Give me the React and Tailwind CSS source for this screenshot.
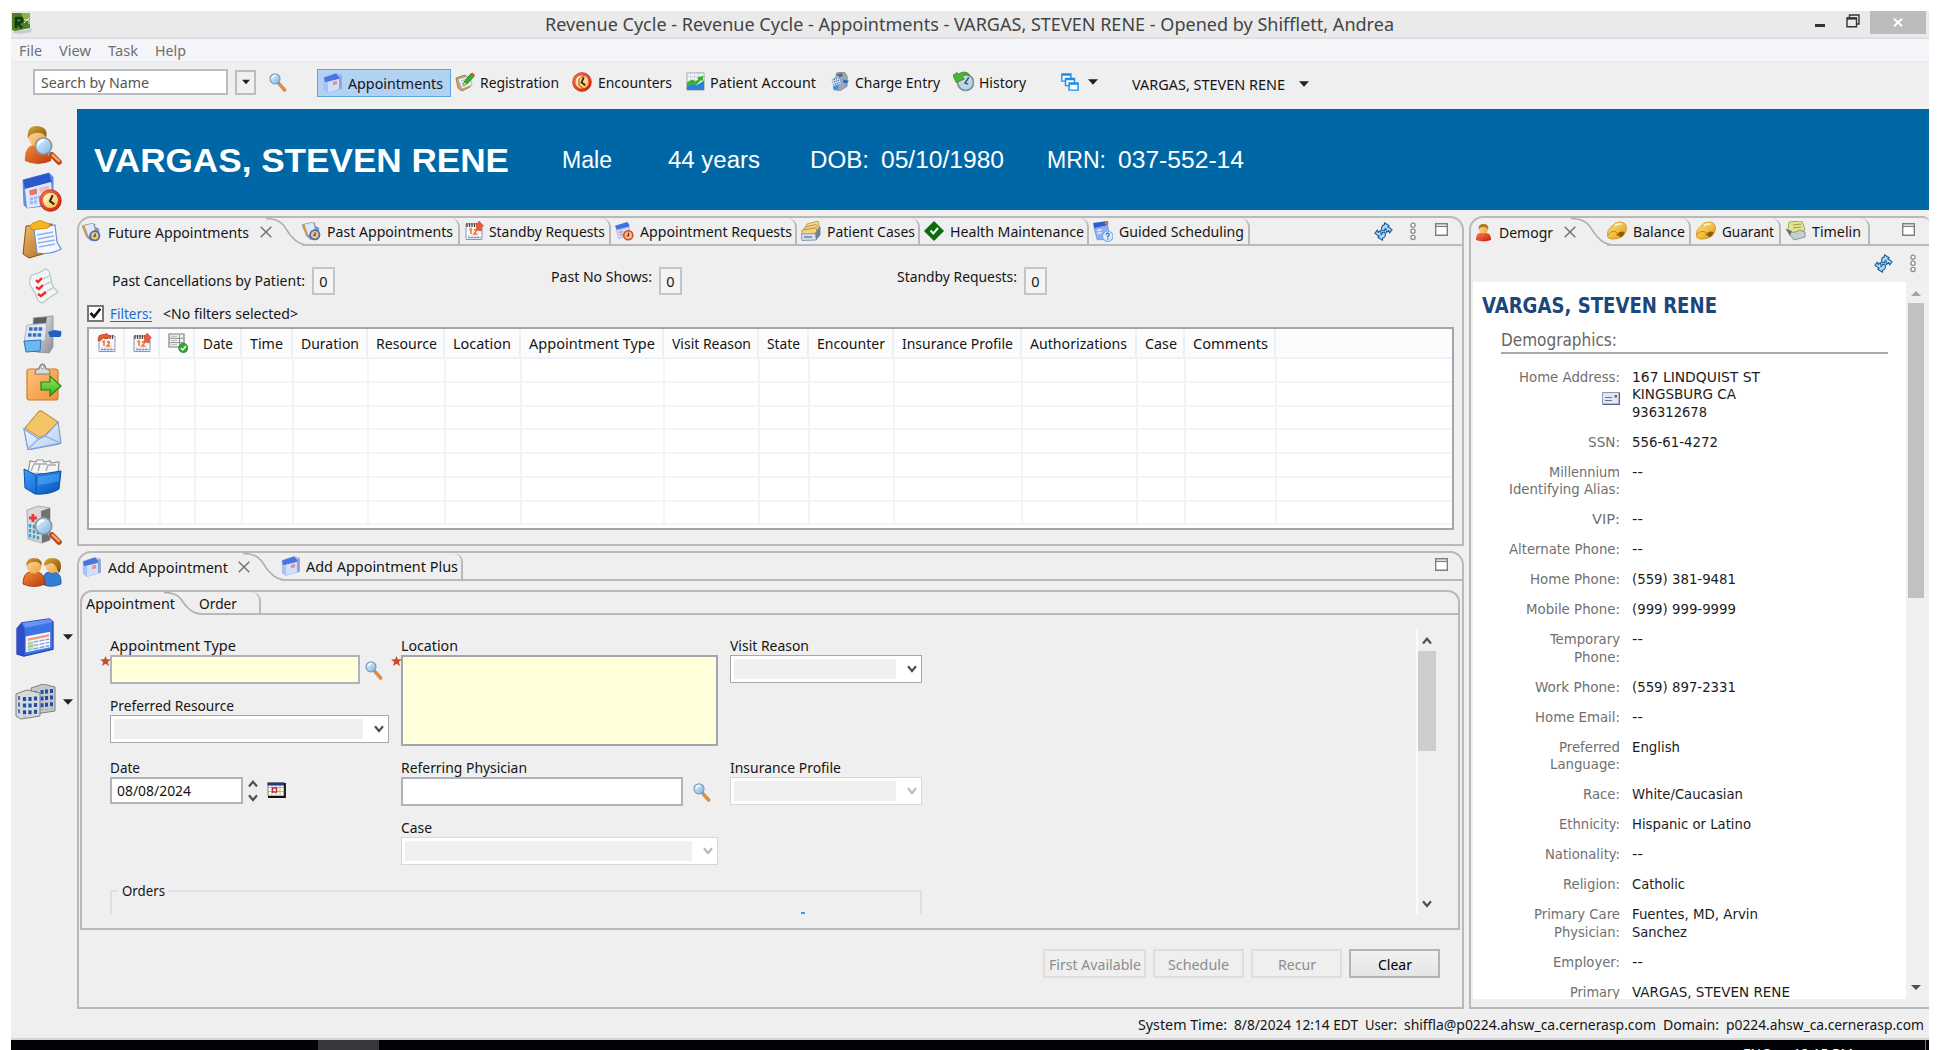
import React, { useLayoutEffect, useRef, useState } from "react";

/* Single line of text condensed or widened to a given advance width. */
function Fit({ w, className = "", children }) {
  const ref = useRef(null);
  const [k, setK] = useState(1);
  useLayoutEffect(() => {
    const n = ref.current.offsetWidth;
    const r = ref.current.getBoundingClientRect().width / k || n;
    setK(w / r);
  }, [w]);
  return (
    <span className={"inline-block shrink-0 whitespace-pre " + className} style={{ width: w }}>
      <span ref={ref} className="inline-block origin-left" style={{ transform: `scaleX(${k})` }}>
        {children}
      </span>
    </span>
  );
}

/* ---------- shared gradients ---------- */
const G = ({ id, a, b, x2 = 1, y2 = 1 }) => (
  <linearGradient id={id} x1="0" y1="0" x2={x2} y2={y2}>
    <stop offset="0" stopColor={a} />
    <stop offset="1" stopColor={b} />
  </linearGradient>
);
const Defs = () => (
  <svg className="absolute h-0 w-0">
    <defs>
      <G id="gPage2" a="#e8f0ff" b="#7fa2ee" />
      <G id="gOrange" a="#f58a3a" b="#b93a0c" />
      <G id="gHair" a="#d9a93a" b="#7d5206" />
      <G id="gSkin" a="#ffd9a0" b="#f0a040" />
      <G id="gLens" a="#e6f6ff" b="#7db4e0" />
      <G id="gBoard" a="#f3bd6a" b="#a8651c" />
      <G id="gBoard2" a="#ffc27a" b="#f0923a" />
      <G id="gGreen" a="#9df05a" b="#35a51e" x2={0} />
      <G id="gSteel" a="#f4f4f4" b="#8a8d92" />
      <G id="gBox" a="#3aa0ff" b="#0653b8" />
      <G id="gGold" a="#ffe680" b="#e09a10" />
      <G id="gRed" a="#ff7a4a" b="#c81e08" />
      <G id="gFace" a="#fffbd8" b="#f3c04a" />
      <G id="gEnv" a="#f7fbff" b="#b5cdf3" />
    </defs>
  </svg>
);

const Svg = ({ s = 20, vb = "0 0 20 20", className = "", children }) => (
  <svg width={s} height={s} viewBox={vb} className={"shrink-0 " + className} fill="none">
    {children}
  </svg>
);

/* ---------- small icons ---------- */
const Clock = ({ x, y, r }) => (
  <g>
    <circle cx={x} cy={y} r={r} fill="url(#gRed)" stroke="#a81808" strokeWidth={r * 0.06} />
    <circle cx={x} cy={y} r={r * 0.7} fill="url(#gFace)" />
    <path
      d={`M${x + r * 0.2} ${y - r * 0.5}L${x - r * 0.05} ${y + r * 0.05}L${x + r * 0.35} ${y + r * 0.35}`}
      stroke="#3a2a10"
      strokeWidth={r * 0.2}
    />
  </g>
);
const AppLogo = () => (
  <Svg s={21} vb="0 0 21 21">
    <path d="M1 18L15 17L20 15L19 19L8 21L1 20Z" fill="#c3ccd6" />
    <path d="M0 0H18V15L3 18L0 17Z" fill="#4d7f26" />
    <path d="M9 0H18V8L12 7Z" fill="#93b23a" />
    <path d="M4 4V15M4 5H8Q11 5 10 8Q9 10 5 10L10 15" stroke="#123a10" strokeWidth="2.4" />
    <path d="M12 10L17 5M12 7H17V11" stroke="#e5efcf" strokeWidth="1" />
  </Svg>
);
const Magnifier = ({ className = "" }) => (
  <Svg s={20} className={className}>
    <path d="M10.5 11L16.5 18" stroke="#8a8f98" strokeWidth="3.4" strokeLinecap="round" />
    <path d="M12 12.6L17 18" stroke="#f08a32" strokeWidth="2.8" strokeLinecap="round" />
    <circle cx="7" cy="6.8" r="5" fill="url(#gLens)" stroke="#7a9cc0" strokeWidth="1.2" />
    <path d="M4 6Q5 3.4 8 3.4" stroke="#fff" strokeWidth="1.4" />
  </Svg>
);
const Appt = () => (
  <Svg>
    <path d="M1 4.5L13 .5L18.5 2V15.5L5 19.5L1.5 17Z" fill="url(#gPage2)" stroke="#8aa5e0" strokeWidth=".6" />
    <path d="M1 4.5L13 .5L16 3.5V6L2 9.500Z" fill="#4a74e0" />
    <path d="M16 3.500L18.500 2V15.500L16 16.300Z" fill="#93a5cf" />
    <path d="M2 9.500L16 6V16.300L5 19.500Z" fill="#cfe0ff" />
    <path d="M2 9.500L5 9V19.500L1.500 17Z" fill="#a9c2f8" />
    <path d="M10 8.800L14 7.800V11.300L10 12.300Z" fill="#f28a80" />
  </Svg>
);
const Registration = () => (
  <Svg>
    <path d="M1 6L10 3L15 8V15L7 19L3 16Z" fill="#d8a862" stroke="#94682c" strokeWidth=".8" />
    <path d="M3 7L15 4L17 13L7 17Z" fill="#e9f2fa" stroke="#8aa0ac" strokeWidth=".7" />
    <path d="M6 9L12 7M7 12L11 11" stroke="#9fb4c4" />
    <path d="M8 14L9 10L16 1.5L19.3 4L12 12Z" fill="#37b22a" stroke="#1b7414" strokeWidth=".8" />
    <path d="M8 14L9 10.3L11.8 12Z" fill="#e9c88c" />
    <path d="M15.8 1.8L17.4 .5L20 2.8L19 4.2Z" fill="#e8553a" />
  </Svg>
);
const Encounters = () => (
  <Svg>
    <Clock x={10} y={10} r={9.4} />
    <path d="M13 2.500L7 7.500V13L13 18" stroke="#e0371a" strokeWidth="1.600" opacity=".7" />
  </Svg>
);
const Account = () => (
  <Svg s={19}>
    <path d="M1 1H19V19H1Z" fill="#f4f6f8" stroke="#9aa6b2" strokeWidth="1" />
    <path d="M5 1V14M9 1V10M13 1V8M1 5H19M1 9H12" stroke="#c2ccd6" strokeWidth=".8" />
    <path d="M1 15L7 12L11 14L19 9V19H1Z" fill="#2f7fe0" />
    <path d="M1 15V11L7 8L10 10L13 7.500L11.500 6L18 4L17.500 10L16 8.500L10.500 14L7 12Z" fill="#2fb51f" />
  </Svg>
);
const Charge = () => (
  <Svg s={19}>
    <path d="M7 1L15 0L18 4V15L10 20L4 18Z" fill="#9aa7b6" stroke="#66707d" strokeWidth=".7" />
    <path d="M7 3L12 1L14 4L9 6Z" fill="#5d6874" />
    <path d="M2 8L9 4L12 12L4 15Z" fill="#dfe8f2" stroke="#7a8796" strokeWidth=".6" />
    <path d="M4 8L9 6M4 10.5L10 8.4M5 13L10 11" stroke="#2b78cf" strokeWidth="1.4" strokeDasharray="1.4 .8" />
    <path d="M14 8L20 9.5L17 12L14 11Z" fill="#1f66c8" />
    <path d="M3 15L9 14V18L4 19.5Z" fill="#3b95e6" />
  </Svg>
);
const HistoryIcon = () => (
  <Svg s={21}>
    <circle cx="12" cy="11" r="7.6" fill="#bcd6e6" stroke="#7291a0" strokeWidth="1.600" />
    <path d="M15 6L11.5 11.5L14.5 12.5" stroke="#33505c" strokeWidth="1.4" />
    <path d="M0 4L4 1.500L5 3Q12 -1.500 16 4Q11 2 9 5.500L11 7.500L3 11Z" fill="#4cb43a" stroke="#2a7d20" strokeWidth=".7" />
  </Svg>
);
const Cascade = () => (
  <Svg s={18}>
    <path d="M1 1H11V9H1Z" fill="#fff" stroke="#1d8de8" strokeWidth="1.6" />
    <path d="M5 6H15V14H5Z" fill="#fff" stroke="#1d8de8" strokeWidth="1.6" />
    <path d="M9 11H19V19H9Z" fill="#fff" stroke="#1d8de8" strokeWidth="1.6" />
    <path d="M1 2H11M5 7H15M9 12H19" stroke="#1d8de8" strokeWidth="2" />
  </Svg>
);
const Future = () => (
  <Svg s={19}>
    <path d="M4 1L14 1V4L18 6V15L9 19L4 14Z" fill="#7f95c4" />
    <path d="M0 3L12 0L15 11L5 15Z" fill="#dfe9ff" stroke="#a8977a" strokeWidth=".8" />
    <path d="M0 3L2.500 2.400L7 14.300L5 15Z" fill="#c99a55" />
    <circle cx="13.500" cy="13.500" r="4.900" fill="#e8c878" stroke="#4a6cb4" strokeWidth="1.800" />
    <path d="M13.800 11V14H11.800" stroke="#4a3512" strokeWidth="1.2" />
  </Svg>
);
const Cal12 = ({ up = true }) => (
  <Svg s={20}>
    <path d="M2 3H18V18.5H2Z" fill="#f6f8ff" stroke="#8c95c0" strokeWidth="1" />
    <path d="M3 2V6M5.5 2V6M8 2V6M10.5 2V6M13 2V6M15.5 2V6" stroke="#5c4038" strokeWidth="1.3" />
    <path d="M5.500 9L7 8V13M10 9.5Q12.500 7.5 12.500 10L10 13H13.500" stroke="#f07a2c" strokeWidth="1.600" />
    <path d="M4 16.5H17M5 14.5V18M8 14.5V18M11 14.5V18M14 14.5V18" stroke="#8391c8" strokeWidth=".8" />
    {up ? (
      <path d="M12.5 9V4.5L15 0L19.5 5L17.5 6V10Z" fill="#f0583a" stroke="#c9402a" strokeWidth=".5" />
    ) : (
      <path d="M1 8L1.500 4Q4 .5 8.500 1.500L9 0L13.500 3.500L9 6L8.500 4.500Q5 4.500 4 7.500Z" fill="#f0562a" stroke="#b33a1a" strokeWidth=".6" />
    )}
  </Svg>
);
const ListOk = () => (
  <Svg s={20}>
    <path d="M1 1H16V14H1Z" fill="#f3f3f3" stroke="#7b8085" strokeWidth="1.2" />
    <path d="M2 5.3H15M2 9.6H15M11.5 2V13" stroke="#8d9196" />
    <path d="M3 3.3H9M3 7.5H9M3 11.6H9" stroke="#b5b8bc" />
    <circle cx="15.3" cy="15" r="4.7" fill="#35a52e" stroke="#1f7a1b" strokeWidth=".6" />
    <path d="M12.8 15L14.8 17L18 13" stroke="#fff" strokeWidth="1.5" />
  </Svg>
);
const ApptReq = () => (
  <Svg s={19}>
    <path d="M0 4L13 0L15 3V6L2 9Z" fill="#3f72e0" />
    <path d="M1.500 8.500L15 5L15 14L4 17.500Z" fill="#cddcff" stroke="#8ba6e8" strokeWidth=".6" />
    <path d="M4 11L8 10M5 14L9 13" stroke="#f0908a" strokeWidth="1.500" />
    <circle cx="14" cy="14" r="4.800" fill="#f3b880" stroke="#d04a2a" strokeWidth="1.600" />
    <path d="M14.200 11.300V14.500H12.300" stroke="#5a2c12" strokeWidth="1.2" />
  </Svg>
);
const Cases = () => (
  <Svg s={20}>
    <path d="M6 3L17 0L19 8H4Z" fill="#f3d98c" stroke="#b58a36" strokeWidth=".8" />
    <path d="M4 6L15 3.500L19 9H3Z" fill="#efcf78" stroke="#b58a36" strokeWidth=".8" />
    <path d="M1 9L15 7L17 13L1 15Z" fill="#f3d484" stroke="#b08434" strokeWidth=".8" />
    <path d="M0 13L14 12.500L19 6V14L15 19L1 19.500Z" fill="#d3e0ec" stroke="#7f92a6" strokeWidth=".9" />
    <path d="M14 12.500L19 6V14L15 19Z" fill="#6d8298" />
    <path d="M3 16H11" stroke="#4f7fae" strokeWidth="1.4" />
  </Svg>
);
const Health = () => (
  <Svg s={20}>
    <path d="M10 0L20 10L10 20L0 10Z" fill="#0b6b0b" />
    <path d="M6.5 9.5L9.3 12.5L14 7" stroke="#fff" strokeWidth="2" />
  </Svg>
);
const Guided = () => (
  <Svg s={21}>
    <path d="M1 2L15 0V4L2 7Z" fill="#2f5cd0" />
    <path d="M2 7L15 4L17 17L5 18Z" fill="#8fb0f4" stroke="#5c82dd" strokeWidth=".6" />
    <path d="M5 9L9 8M5 12L9 11" stroke="#e6efff" strokeWidth="1.5" />
    <path d="M13 0L16 2L14.500 4L12 2.500Z" fill="#e0705a" />
    <circle cx="15" cy="14.5" r="5" fill="#d9ecfb" stroke="#7aa8d8" />
    <path d="M13.5 13Q13.5 11.5 15 11.5Q17 12 16 13.8L15 14.7V15.8M15 16.6V17.8" stroke="#2b74c8" strokeWidth="1.3" />
  </Svg>
);
const PersonSm = () => (
  <Svg s={19}>
    <path d="M2 18Q2 10 7 10.5H12Q18 10 18 18Q10 21 2 18Z" fill="url(#gRed)" />
    <circle cx="10" cy="6.3" r="4.8" fill="url(#gSkin)" />
    <path d="M5 7Q4 1 10 1Q16 1 15 7Q13 3.5 8 4.4Q6 4.6 5 7Z" fill="#b07a14" />
  </Svg>
);
const Coins = () => (
  <Svg s={20}>
    <path d="M0 14Q0 9 5 5Q8 1 13 1Q18.500 1 19.500 6Q20 11 16 15Q10 19 4 18Q0 17 0 14Z" fill="url(#gGold)" stroke="#c98a12" strokeWidth=".7" />
    <path d="M1 14Q3 10 8 10.500Q11 11 10 15" stroke="#c98a12" strokeWidth="1" />
    <path d="M10.500 15Q10 11 15 10.500L17.500 11Q17 15 13 16.500L12 14.500Z" fill="#8a5c10" />
    <path d="M8 4.500Q11 2.200 14.500 3" stroke="#fff6c8" strokeWidth="1.8" />
  </Svg>
);
const Timeline = () => (
  <Svg s={20}>
    <path d="M3 1L16 0L19 9L9 14L2 9Z" fill="#e3e68a" stroke="#9a9e50" strokeWidth=".9" />
    <path d="M7 4L15 3M7 7L15 6" stroke="#9a9e50" strokeWidth="1.2" />
    <path d="M0 8Q6 14 14 9L19 11V16L8 19L4 14Z" fill="#c3d0ce" stroke="#7c8f8d" strokeWidth=".9" />
    <path d="M0 8L6 10L4 15Z" fill="#5f7a78" />
  </Svg>
);
const Refresh = ({ className = "" }) => (
  <Svg s={19} className={className}>
    <g fill="#b9daf5" stroke="#1d5f9e" strokeWidth="1.200" strokeLinejoin="round">
      <path d="M8 8.500Q7.500 3.500 11 3V.8L16 4L14.500 5L19 8L16.500 11.500L15.500 9L13 11L12.500 6.500Q10.800 7 11 9.500Z" />
      <path d="M12 11.500Q12.500 16.500 9 17V19.200L4 16L5.500 15L1 12L3.500 8.500L4.500 11L7 9L7.500 13.500Q9.200 13 9 10.500Z" />
    </g>
  </Svg>
);
const Dots = ({ className = "" }) => (
  <svg width="8" height="19" viewBox="0 0 8 19" fill="none" className={"shrink-0 " + className}>
    <g stroke="#8c8c8c" strokeWidth="1.3" fill="#fff">
      <circle cx="4" cy="3.2" r="2.1" />
      <circle cx="4" cy="9.3" r="2.1" />
      <circle cx="4" cy="15.4" r="2.1" />
    </g>
  </svg>
);
const MaxBox = ({ className = "" }) => (
  <svg width="13" height="13" viewBox="0 0 13 13" fill="none" className={"shrink-0 " + className}>
    <path d="M.7 .7H12.3V12.3H.7Z" fill="#fff" stroke="#7f7f7f" strokeWidth="1.4" />
    <path d="M.7 3.4H12.3" stroke="#7f7f7f" strokeWidth="1.3" />
  </svg>
);
const TabX = ({ className = "" }) => (
  <svg width="12" height="12" viewBox="0 0 12 12" className={"shrink-0 " + className}>
    <path d="M.7 .7L11.3 11.3M11.3 .7L.7 11.3" stroke="#6b6b6b" strokeWidth="1.3" />
  </svg>
);
const Caret = ({ className = "", w = 10 }) => (
  <svg width={w} height="6" viewBox="0 0 10 6" className={"shrink-0 " + className}>
    <path d="M0 .3H10L5 5.7Z" fill="#222" />
  </svg>
);
const Chev = ({ up, c = "#505050", className = "" }) => (
  <svg width="10" height="8" viewBox="0 0 10 8" fill="none" className={"shrink-0 " + className}>
    <path d={up ? "M1 6.5L5 1.8L9 6.5" : "M1 1.3L5 6L9 1.3"} stroke={c} strokeWidth="2.2" />
  </svg>
);
const Star = () => (
  <svg width="11" height="10" viewBox="0 0 11 10" className="absolute -left-[12px] -top-[1px]">
    <path d="M5.5 0L6.8 3.3L11 3.5L7.8 6L9 10L5.5 7.8L2 10L3.2 6L0 3.5L4.2 3.3Z" fill="#cc4a2a" />
  </svg>
);

/* ---------- side bar icons (40 x 40) ---------- */
const Big = ({ children }) => <Svg s={40} vb="0 0 40 40">{children}</Svg>;
const Lens = ({ x = 0, y = 0 }) => (
  <g transform={`translate(${x} ${y})`}>
    <path d="M27 28L31 32" stroke="#a9b4bd" strokeWidth="4" />
    <path d="M30 30L37 37" stroke="#b9421a" strokeWidth="5.5" strokeLinecap="round" />
    <path d="M30.5 30L37 36" stroke="#f9a560" strokeWidth="2.4" strokeLinecap="round" />
    <circle cx="21.5" cy="21" r="8.2" fill="url(#gLens)" stroke="#86939c" strokeWidth="1.6" />
    <path d="M16 20Q17.5 15.5 22 15.5" stroke="#fff" strokeWidth="2" />
  </g>
);
const SidePerson = () => (
  <Big>
    <path d="M3 36Q2 22 11 20H22Q30 23 29 36Q16 42 3 36Z" fill="url(#gOrange)" />
    <ellipse cx="15" cy="13" rx="8" ry="9" fill="url(#gSkin)" />
    <path d="M6 14Q4 1 15 1Q27 2 24 13Q22 7 14 8Q8 8 6 14Z" fill="url(#gHair)" />
    <Lens />
  </Big>
);
const SideCalClock = () => (
  <Big>
    <path d="M1 8L27 1L31 5V33L5 36L2 33Z" fill="#6c8fe4" stroke="#5878cf" strokeWidth=".8" />
    <path d="M1 8L27 1L30 10L3 17Z" fill="#2b59cc" />
    <path d="M3 17L29 10L31 32L5 36Z" fill="#dbe8ff" />
    <path d="M7 18.5L15 16.5V22L8 23.5Z" fill="#f0554a" opacity=".8" />
    <path d="M17 16L27 13.5V19L18 21Z" fill="#f5b8bd" />
    <path d="M8 27L18 25M8 31L16 29.5" stroke="#9db7ee" strokeWidth="3" strokeDasharray="3 1" />
    <Clock x={28.5} y={28.5} r={10.8} />
  </Big>
);
const SideClip = () => (
  <Big>
    <path d="M4 6L30 4L31 31L7 38L1 34Z" fill="url(#gBoard)" stroke="#8a5012" strokeWidth="1" />
    <path d="M12 9L33 5L35 22L39 29Q28 35 15 33Z" fill="#f4f8ff" stroke="#6d8fd8" strokeWidth="1.2" />
    <path d="M15 15L31 12M16 19L32 16M16 23L33 20M17 27L33 24" stroke="#8fb1f0" strokeWidth="1.6" />
    <path d="M8 6Q9 3 14 2Q18 -1 22 2L28 4L26 8L10 10Z" fill="#f7b51e" stroke="#c98208" strokeWidth=".8" />
  </Big>
);
const SideCheck = () => (
  <Big>
    <path d="M10 8Q18 6 24 2Q27 3 28 8L31 20L36 25Q28 30 20 36Q15 34 14 28L8 18Q7 12 10 8Z" fill="#f3f7f9" stroke="#b7c4c9" strokeWidth="1.2" />
    <path d="M14 13L16 15L20 11M14 20L17 22L21 18M16 27L19 29L24 25" stroke="#ef2a22" strokeWidth="2.4" />
    <path d="M21 12L27 9M22 18L29 15M25 24L31 21" stroke="#c3cdd2" strokeWidth="1.4" />
  </Big>
);
const SideRegister = () => (
  <Big>
    <path d="M11 3L31 1V32L27 38L14 37Z" fill="url(#gSteel)" stroke="#8c9096" strokeWidth=".8" />
    <path d="M12 3L25 2L24 9L11 10Z" fill="#5a5f63" />
    <path d="M5 10L25 8L23 26L2 27Z" fill="#e4e8ec" stroke="#a2a8ae" strokeWidth=".8" />
    <path d="M7 14H21M6 20H20" stroke="#2f72cc" strokeWidth="3.600" strokeDasharray="3.6 1.2" />
    <path d="M2 26L19 25L18 36L4 37Z" fill="#6db8f0" stroke="#2d72be" strokeWidth="1" />
    <path d="M26 17L32 15L39 16Q40 20 38 22L28 22Z" fill="#1f62c6" />
  </Big>
);
const SideClipArrow = () => (
  <Big>
    <rect x="5" y="7" width="31" height="31" rx="2.5" fill="url(#gBoard2)" stroke="#cf7d28" strokeWidth="1.2" />
    <path d="M13 12Q13 7 17 7Q18 2 20.500 2Q23 2 24 7Q28 7 28 12Z" fill="#d8dadc" stroke="#7e8285" strokeWidth="1.2" />
    <circle cx="20.500" cy="5" r="1.6" fill="#fff" stroke="#7e8285" strokeWidth=".8" />
    <path d="M19 20H28V14L39 24L28 34V28H19Z" fill="url(#gGreen)" stroke="#23841a" strokeWidth="1.2" />
  </Big>
);
const SideEnv = () => (
  <Big>
    <path d="M2 19L17 1Q19 0 21 2L36 12L38 34L6 40Z" fill="#e9eef8" stroke="#8aa2cc" strokeWidth="1" />
    <path d="M3 18L17 1.500Q19 .5 21 2L36 12L22 26L17 27Z" fill="#f3c568" stroke="#c48f28" strokeWidth="1" />
    <path d="M2 19L17 29L23 26L36 12L39 33L6 39.500Z" fill="url(#gEnv)" stroke="#7f9fd4" strokeWidth="1.2" />
    <path d="M6 39L18 27.500L23 26L38 33" stroke="#8fb0e2" strokeWidth="1.2" />
  </Big>
);
const SideFiles = () => (
  <Big>
    <path d="M6 16L8 4L14 5L15 3H21L22 5L28 4L29 6L37 5L36 17Z" fill="#f5f5f5" stroke="#8f9296" strokeWidth="1.2" />
    <path d="M9 14L12 7H18M16 14L18 7H25M24 14L26 8H34" stroke="#a8abb0" strokeWidth="1.4" />
    <path d="M2 12L14 18L39 14L37 32Q28 38 13 37L3 31Z" fill="url(#gBox)" stroke="#0c4fa6" strokeWidth="1" />
    <path d="M14 18V36" stroke="#0f58b4" strokeWidth="1.2" />
    <path d="M16 20L37 16.500V24Q27 27 16 28Z" fill="#4fb0ff" opacity=".5" />
  </Big>
);
const SideHospital = () => (
  <Big>
    <path d="M5 5L16 1L28 3V35L20 38L6 34Z" fill="#d6d8da" stroke="#9a9da0" strokeWidth=".8" />
    <path d="M19 6L28 3V35L20 38Z" fill="#6e7275" />
    <path d="M11 9V17M7 13H15" stroke="#e63a3a" strokeWidth="2.8" />
    <path d="M8 19V34M12 20V35M16 21V36" stroke="#3b9ed4" strokeWidth="2.4" strokeDasharray="3.4 1.6" />
    <Lens />
  </Big>
);
const SidePeople = () => (
  <Big>
    <path d="M22 30Q20 21 27 20H33Q40 22 39 32Q30 36 22 33Z" fill="#2f7fd6" stroke="#1a559c" strokeWidth=".8" />
    <circle cx="30.5" cy="14" r="7" fill="url(#gSkin)" />
    <path d="M22 14Q22 6 30 6Q39 6 39 14Q39 20 36 21Q35 13 30 11Q26 12 22 14Z" fill="url(#gHair)" />
    <path d="M1 32Q1 21 8 20H16Q23 22 23 32Q12 37 1 32Z" fill="url(#gOrange)" stroke="#9c2f0a" strokeWidth=".8" />
    <circle cx="12" cy="14" r="7.4" fill="url(#gSkin)" />
    <path d="M4.500 14Q4 6 12 6Q20.500 6 19.500 14Q17 9 12 10Q7 10 4.500 14Z" fill="url(#gHair)" />
  </Big>
);
const SideCal = () => (
  <Svg s={39} vb="0 0 40 40">
    <path d="M1 11L6 5L34 1L38 4V32L8 39L1 37Z" fill="#3d74e4" stroke="#1f3fae" strokeWidth="1.2" />
    <path d="M1 11L6 5L9 12V39L1 37Z" fill="#2f4fc8" />
    <path d="M6 5L34 1L38 4L10 10Z" fill="#6b93f3" />
    <path d="M10 19L35 14V30L10 35Z" fill="#f6f9ff" />
    <path d="M12 21L34 16.500V19L12 23.500Z" fill="#ef9a86" />
    <path d="M12 26L34 21.500M12 29.500L34 25M12 33L34 28.500" stroke="#8d9be0" strokeWidth="1.4" strokeDasharray="5 1.2" />
    <path d="M12 25V33.500L18 32V24Z" fill="#9fdc9a" opacity=".7" />
  </Svg>
);
const SideBuildings = () => (
  <svg width="41" height="36" viewBox="0 0 41 36" fill="none" className="shrink-0">
    <path d="M16 4L28 0L40 3V27L20 30Z" fill="#c6c8ca" stroke="#7d8083" />
    <path d="M27 6V26M31.500 5.500V25.500M36.500 5V25" stroke="#1f4fa8" strokeWidth="3" strokeDasharray="4 2.600" />
    <path d="M20 7V12" stroke="#1f4fa8" strokeWidth="3" />
    <path d="M1 10L12 6L25 9V32L6 35L1 32Z" fill="#d8dadb" stroke="#7d8083" />
    <path d="M9.500 13V33M15 13V32.500M20.500 12.500V32" stroke="#1f4fa8" strokeWidth="3.200" strokeDasharray="4 2.600" />
    <path d="M4 12V31" stroke="#4a6fae" strokeWidth="2" strokeDasharray="4 2.600" />
  </svg>
);

/* ---------- building blocks ---------- */
const LINE = "border-[#b9b9b9]";

/* Slanted edge between the selected tab and the next one. */
const Curve = ({ w, h }) => (
  <svg width={w} height={h} viewBox={`0 0 ${w} ${h}`} fill="none" className="shrink-0">
    <path d={`M0 .5C${w * 0.45} 1 ${w * 0.42} ${h * 0.42} ${w * 0.58} ${h * 0.66}C${w * 0.7} ${h * 0.88} ${w * 0.8} ${h - 1} ${w} ${h - 1}`} stroke="#adadad" strokeWidth="1.6" />
  </svg>
);
const Tab = ({ icon, w, children, className = "", gap = "gap-[6px]" }) => (
  <div className={"flex h-full shrink-0 items-center rounded-tr-[9px] border-r-2 border-b-2 " + LINE + " " + gap + " " + className}>
    {icon}
    <Fit w={w}>{children}</Fit>
  </div>
);
const Label = ({ w, children, className = "" }) => (
  <div className={"flex h-[19px] shrink-0 items-start " + className}>
    <Fit w={w} className="leading-[18px]">{children}</Fit>
  </div>
);
const Select = ({ className = "", disabled }) => (
  <div className={"flex h-[28px] items-stretch border bg-white p-[3px] " + (disabled ? "border-[#d8d8d8] " : "border-[#a4a8b1] ") + className}>
    <div className="flex-1 bg-[#f0f0f0]" />
    <div className="flex w-[22px] items-center justify-end pr-[1px]">
      <Chev c={disabled ? "#b9b9b9" : "#505050"} />
    </div>
  </div>
);
const Count = ({ w, children, className = "", up }) => (
  <div className={"flex h-[28px] " + className}>
    <Fit w={w} className={up ? "-mt-[1px]" : "pt-[3px]"}>{children}</Fit>
    <div className="ml-[7px] flex w-[23px] items-center justify-center border-2 border-[#c3c5cb] bg-[#f4f4f4] pb-[1px]">0</div>
  </div>
);

const COLS = [
  ["w-[47px]", 30, "Date"],
  ["w-[51px]", 33, "Time"],
  ["w-[75px]", 58, "Duration"],
  ["w-[77px]", 61, "Resource"],
  ["w-[76px]", 58, "Location"],
  ["w-[143px]", 126, "Appointment Type"],
  ["w-[95px]", 79, "Visit Reason"],
  ["w-[50px]", 33, "State"],
  ["w-[85px]", 68, "Encounter"],
  ["w-[128px]", 111, "Insurance Profile"],
  ["w-[115px]", 97, "Authorizations"],
  ["w-[48px]", 32, "Case"],
  ["w-[91px]", 75, "Comments"],
];

const DEMO = [
  [[["Home Address:", 101]], [["167 LINDQUIST ST", 128], ["KINGSBURG CA", 104], ["936312678", 75]], true],
  [[["SSN:", 32]], [["556-61-4272", 86]]],
  [[["Millennium", 71], ["Identifying Alias:", 111]], [["--", 11]]],
  [[["VIP:", 28]], [["--", 11]]],
  [[["Alternate Phone:", 111]], [["--", 11]]],
  [[["Home Phone:", 90]], [["(559) 381-9481", 104]]],
  [[["Mobile Phone:", 94]], [["(999) 999-9999", 104]]],
  [[["Temporary", 70], ["Phone:", 46]], [["--", 11]]],
  [[["Work Phone:", 85]], [["(559) 897-2331", 104]]],
  [[["Home Email:", 85]], [["--", 11]]],
  [[["Preferred", 61], ["Language:", 70]], [["English", 48]]],
  [[["Race:", 37]], [["White/Caucasian", 111]]],
  [[["Ethnicity:", 61]], [["Hispanic or Latino", 119]]],
  [[["Nationality:", 75]], [["--", 11]]],
  [[["Religion:", 57]], [["Catholic", 53]]],
  [[["Primary Care", 86], ["Physician:", 66]], [["Fuentes, MD, Arvin", 126], ["Sanchez", 55]]],
  [[["Employer:", 67]], [["--", 11]]],
  [[["Primary", 50]], [["VARGAS, STEVEN RENE", 158]]],
];

const AddressCard = () => (
  <svg width="18" height="13" viewBox="0 0 18 13" className="mt-[6px]">
    <path d="M.5 .5H17.500V12.500H.5Z" fill="#dfe6f5" stroke="#8b96b5" />
    <path d="M1 12.300H17.300V1" fill="none" stroke="#4d5f8f" strokeWidth="1.3" />
    <path d="M3 5.500H10M3 8.500H10" stroke="#6b7390" />
    <path d="M12.500 3H15V5.500H12.500Z" fill="#d63a2a" />
  </svg>
);

function TopBars() {
  return (
    <>
      <div className="flex h-[28px] items-start border-b-2 border-[#dfdfe1] bg-[#eaeaea]">
        <div className="w-[534px] pt-[2px] pl-[1px]"><AppLogo /></div>
        <div className="text-[18.500px] leading-[26px] text-[#444]">
          <Fit w={849} className="-mt-[1px]">Revenue Cycle - Revenue Cycle - Appointments - VARGAS, STEVEN RENE - Opened by Shifflett, Andrea</Fit>
        </div>
        <div className="ml-auto mr-[3px] flex">
          <div className="mt-[13px] h-[3px] w-[10px] bg-[#333]" />
          <svg width="14" height="14" viewBox="0 0 14 14" fill="none" className="ml-[21px] mt-[3px]">
            <path d="M3.500 3V1H13V10H11" stroke="#333" strokeWidth="1.400" />
            <path d="M1 4H10.500V12.800H1Z" stroke="#333" strokeWidth="1.400" />
            <path d="M1 4.500H10.500" stroke="#333" strokeWidth="2.200" />
          </svg>
          <div className="ml-[10px] flex h-[23px] w-[56px] items-center justify-center bg-[#bcbcbc]">
            <svg width="10" height="9" viewBox="0 0 10 9"><path d="M1 .7L9 8.300M9 .7L1 8.300" stroke="#fff" strokeWidth="1.900" /></svg>
          </div>
        </div>
      </div>
      <div className="flex h-[24px] items-center border-b-2 border-[#ebecef] bg-[#f4f5f8] pl-[8px] text-[#6f6f6f]">
        <Fit w={23}>File</Fit>
        <Fit w={32} className="ml-[17px]">View</Fit>
        <Fit w={30} className="ml-[17px]">Task</Fit>
        <Fit w={31} className="ml-[17px]">Help</Fit>
      </div>
      <div className="flex h-[46px] items-start pt-[6px]">
        <div className="ml-[22px] flex h-[26px] w-[195px] items-center border-2 border-[#b9bcc4] bg-white pb-[1px] pl-[6px] text-[#555]">
          <Fit w={108}>Search by Name</Fit>
        </div>
        <div className="ml-[7px] mt-[1px] flex h-[25px] w-[21px] items-center justify-center border-2 border-[#bdbdbd] bg-[#f0f0f0] pb-[1px]">
          <Caret w={8} />
        </div>
        <Magnifier className="ml-[12px] mt-[3px]" />
        <div className="ml-[29px] flex h-[28px] w-[134px] items-center gap-[5px] border border-[#5fa3de] bg-[#b1d2f3] pl-[5px]">
          <Appt />
          <Fit w={95}>Appointments</Fit>
        </div>
        <div className="flex h-[25px] items-center">
          <div className="ml-[4px] flex items-center gap-[5px]"><Registration /><Fit w={79}>Registration</Fit></div>
          <div className="ml-[13px] flex items-center gap-[6px]"><Encounters /><Fit w={74}>Encounters</Fit></div>
          <div className="ml-[14px] flex items-center gap-[5px]"><Account /><Fit w={106}>Patient Account</Fit></div>
          <div className="ml-[14px] flex items-center gap-[6px]"><Charge /><Fit w={85}>Charge Entry</Fit></div>
          <div className="ml-[13px] flex items-center gap-[5px]"><HistoryIcon /><Fit w={47}>History</Fit></div>
          <div className="ml-[35px] flex items-center gap-[9px]"><Cascade /><Caret w={10} /></div>
        </div>
        <div className="ml-[34px] flex h-[29px] items-center gap-[14px]">
          <Fit w={153}>VARGAS, STEVEN RENE</Fit>
          <Caret />
        </div>
      </div>
    </>
  );
}

function Sidebar() {
  return (
    <div className="flex w-[66px] shrink-0 flex-col pt-[12px] pl-[11px]">
      {[SidePerson, SideCalClock, SideClip, SideCheck, SideRegister, SideClipArrow, SideEnv, SideFiles, SideHospital, SidePeople].map((I, i) => (
        <div key={i} className="flex h-[47.500px] items-center"><I /></div>
      ))}
      <div className="-ml-[6px] mt-[21px] flex h-[40px] items-center gap-[8px]"><SideCal /><Caret /></div>
      <div className="-ml-[7px] mt-[26px] flex h-[38px] items-center gap-[7px]"><SideBuildings /><Caret /></div>
    </div>
  );
}

function AppointmentsPanel() {
  return (
    <div className={"flex h-[330px] flex-col rounded-t-[14px] border-2 " + LINE}>
      <div className="flex h-[28px] shrink-0">
        <div className="flex w-[187px] shrink-0 items-center pl-[3px]">
          <Future />
          <Fit w={141} className="ml-[7px]">Future Appointments</Fit>
          <TabX className="ml-[11px]" />
        </div>
        <Curve w={44} h={28} />
        <div className="-ml-[8px] h-full w-0" />
        <Tab icon={<Future />} w={126} className="w-[158px]">Past Appointments</Tab>
        <Tab icon={<Cal12 />} w={116} className="w-[151px] pl-[4px]" gap="gap-[5px]">Standby Requests</Tab>
        <Tab icon={<ApptReq />} w={152} className="w-[186px] pl-[4px]">Appointment Requests</Tab>
        <Tab icon={<Cases />} w={88} className="w-[123px] pl-[4px]">Patient Cases</Tab>
        <Tab icon={<Health />} w={134} className="w-[169px] pl-[4px]">Health Maintenance</Tab>
        <Tab icon={<Guided />} w={125} className="w-[161px] pl-[3px]">Guided Scheduling</Tab>
        <div className={"flex flex-1 items-center justify-end border-b-2 " + LINE}>
          <Refresh />
          <Dots className="ml-[16px]" />
          <MaxBox className="ml-[18px] mr-[14px] -mt-[3px]" />
        </div>
      </div>
      <div className="mt-[21px] flex shrink-0 pl-[33px]">
        <Count w={193}>Past Cancellations by Patient:</Count>
        <Count w={101} up className="ml-[216px]">Past No Shows:</Count>
        <Count w={120} up className="ml-[215px]">Standby Requests:</Count>
      </div>
      <div className="mt-[7px] flex h-[22px] shrink-0 items-center pl-[8px]">
        <div className="flex h-[17px] w-[17px] items-center justify-center border-2 border-[#777] bg-white">
          <svg width="13" height="12" viewBox="0 0 13 12"><path d="M1.500 6L5 9.800L11.300 1.800" fill="none" stroke="#111" strokeWidth="2.600" /></svg>
        </div>
        <Fit w={42} className="ml-[6px] text-[#1a6bd6] [&>span]:underline [&>span]:underline-offset-2">Filters:</Fit>
        <Fit w={135} className="ml-[11px]">&lt;No filters selected&gt;</Fit>
      </div>
      <div className="ml-[8px] mr-[8px] mt-[3px] flex h-[203px] shrink-0 flex-col border-2 border-[#a3a6ae] bg-white">
        <div className="flex h-[30px] shrink-0 border-b-2 border-[#eaf2fa] bg-[#fcfcfc]">
          <div className="flex w-[36px] items-center justify-end border-r-2 border-[#e8f1fa] pr-[6px]"><Cal12 up={false} /></div>
          <div className="flex w-[35px] items-center justify-end border-r-2 border-[#e8f1fa] pr-[6px]"><Cal12 /></div>
          <div className="flex w-[35px] items-center justify-end border-r-2 border-[#e8f1fa] pr-[5px]"><ListOk /></div>
          {COLS.map(([cls, w, t]) => (
            <div key={t} className={"flex shrink-0 items-center border-r-2 border-[#e8f1fa] pl-[8px] " + cls}>
              <Fit w={w}>{t}</Fit>
            </div>
          ))}
        </div>
        <div className="flex flex-1 flex-col overflow-hidden">
          {[0, 1, 2, 3, 4, 5, 6].map((r) => (
            <div key={r} className="flex h-[23.750px] shrink-0 border-b-2 border-[#f4f4f4]">
              {["w-[37px]", "w-[35px]", "w-[35px]", ...COLS.map((c) => c[0])].map((cls, i) => (
                <div key={i} className={"shrink-0 border-r-2 border-[#f4f4f4] " + cls} />
              ))}
            </div>
          ))}
        </div>
      </div>
    </div>
  );
}

function Form() {
  return (
    <div className="flex flex-1 pt-[14px]">
      <div className="flex h-[285px] flex-1 flex-col overflow-hidden pl-[28px]">
        <div className="flex h-[251px] shrink-0 pt-[7px]">
          <div className="w-[291px] shrink-0">
            <Label w={126}>Appointment Type</Label>
            <div className="flex items-center gap-[4px]">
              <div className="relative h-[29px] w-[250px] border-2 border-[#b0b3ba] bg-[#ffffd9]"><Star /></div>
              <Magnifier />
            </div>
            <Label w={124} className="mt-[12px]">Preferred Resource</Label>
            <Select className="w-[279px]" />
            <Label w={30} className="mt-[15px]">Date</Label>
            <div className="flex items-center">
              <div className="flex h-[27px] w-[133px] items-center border-2 border-[#b0b3ba] bg-white pb-[1px] pl-[5px]"><Fit w={74}>08/08/2024</Fit></div>
              <div className="ml-[5px] flex flex-col gap-[6px]"><Chev up /><Chev /></div>
              <svg width="19" height="16" viewBox="0 0 19 16" className="-mt-[1px] ml-[9px]">
                <path d="M1 1H17V14H1Z" fill="#fbfbe6" stroke="#7d7d52" />
                <path d="M1 5.500H17M1 9.500H17M5 3V14M9 3V14M13 3V14" stroke="#b9b98c" />
                <path d="M.5 .5H17.500V3.500H.5Z" fill="#1f3a8c" />
                <path d="M18 1V15H1" fill="none" stroke="#111" strokeWidth="1.800" />
                <path d="M5.500 6H9.500V10H5.500Z" fill="#fff" stroke="#b8285a" strokeWidth="1.500" />
              </svg>
            </div>
          </div>
          <div className="w-[329px] shrink-0">
            <Label w={57}>Location</Label>
            <div className="relative h-[91px] w-[317px] border-2 border-[#a3a6ad] bg-[#ffffd9]"><Star /></div>
            <Label w={126} className="mt-[12px]">Referring Physician</Label>
            <div className="flex items-center gap-[9px]">
              <div className="h-[29px] w-[282px] border-2 border-[#b0b3ba] bg-white" />
              <Magnifier />
            </div>
            <Label w={31} className="mt-[12px]">Case</Label>
            <Select disabled className="w-[317px]" />
          </div>
          <div>
            <Label w={79}>Visit Reason</Label>
            <Select className="w-[192px]" />
            <Label w={111} className="mt-[75px]">Insurance Profile</Label>
            <Select disabled className="w-[192px]" />
          </div>
        </div>
        <div className="flex h-[34px] w-[812px] shrink-0 flex-col">
          <div className="flex h-[20px] items-center">
            <div className="mt-[10px] h-[10px] w-[8px] self-start border-t-2 border-l-2 border-[#e0e0e0]" />
            <Fit w={43} className="mx-[4px]">Orders</Fit>
            <div className="mt-[10px] h-[10px] flex-1 self-start border-t-2 border-r-2 border-[#e0e0e0]" />
          </div>
          <div className="flex flex-1 items-end border-x-2 border-[#e0e0e0] pl-[689px]">
            <div className="h-[2px] w-[4px] bg-[#4a97dc]" />
          </div>
        </div>
      </div>
      <div className="mr-[22px] flex h-[285px] w-[20px] flex-col items-center border-l-2 border-[#fafafa]">
        <Chev up className="mt-[8px]" />
        <div className="mt-[6px] h-[100px] w-[18px] bg-[#cdcdcd]" />
        <Chev className="mt-auto mb-[6px]" />
      </div>
    </div>
  );
}

function AddPanel() {
  return (
    <div className={"mt-[5px] flex h-[458px] flex-col rounded-t-[14px] border-2 " + LINE}>
      <div className="flex h-[28px] shrink-0">
        <div className="flex w-[164px] shrink-0 items-center pb-[1px] pl-[3px]">
          <Appt />
          <Fit w={120} className="ml-[6px]">Add Appointment</Fit>
          <TabX className="ml-[10px]" />
        </div>
        <Curve w={45} h={28} />
        <Tab icon={<Appt />} w={152} className="-ml-[7px] w-[182px]" gap="gap-[5px]">Add Appointment Plus</Tab>
        <div className={"flex flex-1 items-center justify-end border-b-2 " + LINE}>
          <MaxBox className="mr-[14px] -mt-[3px]" />
        </div>
      </div>
      <div className={"ml-[1px] mr-[2px] mt-[9px] flex h-[340px] shrink-0 flex-col rounded-t-[12px] border-2 " + LINE}>
        <div className="flex h-[23px] shrink-0">
          <div className="flex w-[82px] shrink-0 items-center pb-[2px] pl-[4px]"><Fit w={89}>Appointment</Fit></div>
          <Curve w={40} h={23} />
          <div className={"-ml-[5px] flex w-[62px] shrink-0 items-center rounded-tr-[9px] border-b-2 border-r-2 " + LINE}><Fit w={38}>Order</Fit></div>
          <div className={"flex-1 border-b-2 " + LINE} />
        </div>
        <Form />
      </div>
      <div className="mt-[19px] flex justify-end gap-[7px] pr-[22px] text-[#8d8d8d]">
        <div className="flex h-[29px] w-[103px] items-center justify-center border-2 border-[#dedede]"><Fit w={92}>First Available</Fit></div>
        <div className="flex h-[29px] w-[91px] items-center justify-center border-2 border-[#dedede]"><Fit w={61}>Schedule</Fit></div>
        <div className="flex h-[29px] w-[91px] items-center justify-center border-2 border-[#dedede]"><Fit w={38}>Recur</Fit></div>
        <div className="flex h-[29px] w-[91px] items-center justify-center border-2 border-[#b4b4b4] bg-gradient-to-b from-[#f1f1f1] to-[#e5e5e5] text-black"><Fit w={34}>Clear</Fit></div>
      </div>
    </div>
  );
}

function DemographicsPanel() {
  return (
    <div className={"ml-[5px] flex h-[793px] w-[460px] flex-col rounded-tl-[14px] rounded-tr-[6px] border-2 border-r-0 " + LINE}>
      <div className="flex h-[28px] shrink-0">
        <div className="flex w-[100px] shrink-0 items-center pl-[3px]">
          <PersonSm />
          <Fit w={54} className="ml-[6px]">Demogr</Fit>
          <TabX className="ml-[11px]" />
        </div>
        <Curve w={45} h={28} />
        <Tab icon={<Coins />} w={52} className="-ml-[9px] w-[84px]">Balance</Tab>
        <Tab icon={<Coins />} w={52} className="w-[90px] pl-[5px]">Guarant</Tab>
        <Tab icon={<Timeline />} w={49} className="w-[89px] pl-[5px]">Timelin</Tab>
        <div className={"flex flex-1 items-center justify-end border-b-2 " + LINE}>
          <MaxBox className="mr-[14px] -mt-[3px]" />
        </div>
      </div>
      <div className="flex h-[36px] shrink-0 items-start justify-end pt-[8px] pr-[12px]">
        <Refresh /><Dots className="ml-[16px]" />
      </div>
      <div className="flex h-[717px] shrink-0 pl-[2px]">
        <div className="h-full w-[433px] shrink-0 overflow-hidden bg-white pl-[9px] pt-[10px] font-['DejaVu_Sans_Condensed','DejaVu_Sans',sans-serif]">
          <div className="h-[28px] text-[21px] leading-[28px] font-bold text-[#1b477a]"><Fit w={235}>VARGAS, STEVEN RENE</Fit></div>
          <div className="ml-[19px] mt-[9px] h-[25px] w-[387px] border-b-2 border-[#a9a9a9] text-[17.500px] leading-[22px] text-[#666]">
            <Fit w={116}>Demographics:</Fit>
          </div>
          <div className="mt-[15px] text-[14px] leading-[17.400px]">
            {DEMO.map(([labels, vals, card], i) => (
              <div key={i} className="flex pb-[12.620px]">
                <div className="flex w-[138px] shrink-0 flex-col items-end text-[#707070]">
                  {labels.map(([t, w]) => <Fit key={t} w={w}>{t}</Fit>)}
                  {card && <AddressCard />}
                </div>
                <div className="ml-[12px] flex flex-col text-[#1c1c1c]">
                  {vals.map(([t, w]) => <Fit key={t} w={w}>{t}</Fit>)}
                </div>
              </div>
            ))}
          </div>
        </div>
        <div className="flex w-[23px] flex-col items-center bg-[#f0f0f0] pr-[3px]">
          <svg width="10" height="5" viewBox="0 0 10 5" className="mt-[9px] shrink-0"><path d="M5 0L10 5H0Z" fill="#a3a3a3" /></svg>
          <div className="mt-[7px] h-[295px] w-[16px] bg-[#c1c1c1]" />
          <svg width="10" height="5" viewBox="0 0 10 5" className="mt-auto mb-[9px] shrink-0"><path d="M5 5L10 0H0Z" fill="#505050" /></svg>
        </div>
      </div>
    </div>
  );
}

export default function App() {
  return (
    <div className="h-[1050px] w-[1940px] overflow-hidden bg-white pl-[11px] pt-[11px] font-['Noto_Sans','Open_Sans',sans-serif] text-[14.500px] leading-[20px] text-[#151515]">
      <Defs />
      <div className="flex h-[1039px] w-[1918px] flex-col bg-[#efefef]">
        <TopBars />
        <div className="flex">
          <Sidebar />
          <div className="flex-1">
            <div className="flex h-[101px] items-center bg-[#0067a7] pl-[17px] font-['Liberation_Sans',Arial,sans-serif] text-[23px] text-white">
              <Fit w={415} className="text-[34px] leading-[40px] font-bold">VARGAS, STEVEN RENE</Fit>
              <Fit w={50} className="ml-[53px]">Male</Fit>
              <Fit w={92} className="ml-[56px]">44 years</Fit>
              <Fit w={59} className="ml-[50px]">DOB:</Fit>
              <Fit w={123} className="ml-[12px]">05/10/1980</Fit>
              <Fit w={59} className="ml-[43px]">MRN:</Fit>
              <Fit w={126} className="ml-[12px]">037-552-14</Fit>
            </div>
            <div className="mt-[6px] flex">
              <div className="w-[1387px] shrink-0">
                <AppointmentsPanel />
                <AddPanel />
              </div>
              <DemographicsPanel />
            </div>
          </div>
        </div>
        <div className="flex h-[31px] shrink-0 items-center justify-end border-b-2 border-[#d5d5d5] pr-[5px]">
          <Fit w={89}>System Time:</Fit>
          <Fit w={124} className="ml-[7px]">8/8/2024 12:14 EDT</Fit>
          <Fit w={32} className="ml-[7px]">User:</Fit>
          <Fit w={252} className="ml-[7px]">shiffla@p0224.ahsw_ca.cernerasp.com</Fit>
          <Fit w={56} className="ml-[7px]">Domain:</Fit>
          <Fit w={198} className="ml-[7px]">p0224.ahsw_ca.cernerasp.com</Fit>
        </div>
        <div className="flex h-[10px] shrink-0 overflow-hidden bg-[#020307] text-[15px] leading-[20px] text-white">
          <div className="ml-[307px] h-full w-[61px] bg-[#37383c]" />
          <Fit w={28} className="ml-[1364px] pt-[3px]">ENG</Fit>
          <Fit w={60} className="ml-[22px] pt-[3px]">12:15 PM</Fit>
          <div className="ml-auto mr-[3px] h-full w-[1px] bg-[#777]" />
        </div>
      </div>
    </div>
  );
}
